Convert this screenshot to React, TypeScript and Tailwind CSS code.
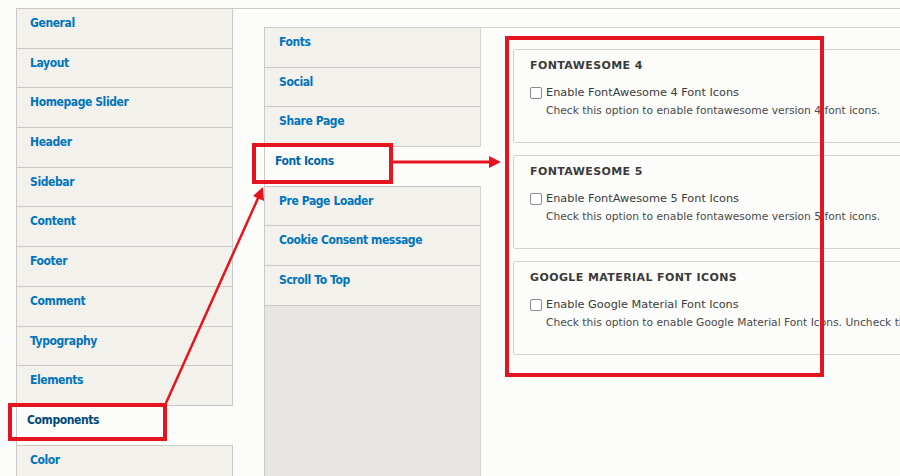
import React from 'react';

const outerTabs = [
  'General',
  'Layout',
  'Homepage Slider',
  'Header',
  'Sidebar',
  'Content',
  'Footer',
  'Comment',
  'Typography',
  'Elements',
  'Components',
  'Color',
];

const innerTabs = [
  'Fonts',
  'Social',
  'Share Page',
  'Font Icons',
  'Pre Page Loader',
  'Cookie Consent message',
  'Scroll To Top',
];

const groups = [
  {
    title: 'FONTAWESOME 4',
    label: 'Enable FontAwesome 4 Font Icons',
    help: 'Check this option to enable fontawesome version 4 font icons.',
  },
  {
    title: 'FONTAWESOME 5',
    label: 'Enable FontAwesome 5 Font Icons',
    help: 'Check this option to enable fontawesome version 5 font icons.',
  },
  {
    title: 'GOOGLE MATERIAL FONT ICONS',
    label: 'Enable Google Material Font Icons',
    help: 'Check this option to enable Google Material Font Icons. Uncheck this option to disable them.',
  },
];

function Tab({
  label,
  active,
  pad,
  activeColor,
}: {
  label: string;
  active: boolean;
  pad: string;
  activeColor: string;
}) {
  return (
    <li
      className={
        active
          ? 'relative z-10 -mr-px h-[39.7px] border-b border-[#c9c9c9] bg-[#fcfcfa] pl-[10px] pt-[7px]'
          : `h-[39.7px] border-b border-[#c9c9c9] bg-[#f2f1ec] ${pad} pt-[7px]`
      }
    >
      <a
        className={`block text-[12px] font-bold leading-[14px] tracking-[-0.4px] ${active ? activeColor : 'text-[#0074bd]'}`}
        style={{ fontFamily: '"DejaVu Sans Condensed", "DejaVu Sans", sans-serif', fontStretch: 'condensed' }}
      >
        {label}
      </a>
    </li>
  );
}

function Overlay() {
  // red annotation boxes and arrows drawn over the page
  return (
    <svg className="pointer-events-none absolute inset-0 z-20" width="900" height="476" viewBox="0 0 900 476">
      <g fill="none" stroke="#e5141f" strokeWidth="4">
        <rect x="10" y="405" width="155" height="34" />
        <rect x="254" y="145" width="137" height="37" />
        <rect x="507" y="38" width="315" height="337" />
      </g>
      <line x1="166" y1="403" x2="259" y2="196" stroke="#e5141f" strokeWidth="2.5" />
      <polygon points="263,187 264,201 253,196" fill="#e5141f" />
      <line x1="393" y1="162" x2="491" y2="162" stroke="#e5141f" strokeWidth="3" />
      <polygon points="489,156 501,162 489,168" fill="#e5141f" />
    </svg>
  );
}

export default function App() {
  return (
    <div
      className="relative flex h-[476px] w-[900px] overflow-hidden bg-[#fcfcfa] pl-4 pt-2"
      style={{ fontFamily: '"DejaVu Sans", Verdana, sans-serif' }}
    >
      {/* outer vertical tabs */}
      <ul className="w-[216px] shrink-0 border-l border-t border-[#c9c9c9]">
        {outerTabs.map((t) => (
          <Tab key={t} label={t} active={t === 'Components'} pad="pl-[13px]" activeColor="text-[#00497a]" />
        ))}
      </ul>

      <div className="flex flex-1 border-l border-t border-[#c9c9c9] bg-[#fcfcfa] pl-[31px] pt-[18px]">
        {/* inner vertical tabs */}
        <div className="flex w-[216px] shrink-0 flex-col border-l border-t border-[#c9c9c9] bg-[#e7e6e2]">
          <ul>
            {innerTabs.map((t) => (
              <Tab key={t} label={t} active={t === 'Font Icons'} pad="pl-[14px]" activeColor="text-[#0066aa]" />
            ))}
          </ul>
          <div className="flex-1" />
        </div>

        <div className="flex flex-1 flex-col gap-3 border-l border-t border-[#d6d6d6] pl-8 pt-[21px]">
          {groups.map((g) => (
            <div
              key={g.title}
              className="h-[94px] w-[470px] shrink-0 rounded-[2px] border border-[#d2d2d2] bg-[#fcfcfa] px-4 pt-[9px]"
            >
              <h3 className="text-[11px] font-bold leading-[13px] tracking-[0.4px] text-[#3b3b3b]">{g.title}</h3>
              <label className="mt-[14px] flex items-center gap-1 whitespace-nowrap text-[11.3px] leading-[14px] text-[#3b3b3b]">
                <span className="h-[12px] w-[12px] shrink-0 rounded-[2px] border border-[#8c8c8c] bg-white" />
                {g.label}
              </label>
              <p className="mt-[4px] whitespace-nowrap pl-4 text-[10.7px] leading-[13px] text-[#4a4a4a]">{g.help}</p>
            </div>
          ))}
        </div>
      </div>

      <Overlay />
    </div>
  );
}
